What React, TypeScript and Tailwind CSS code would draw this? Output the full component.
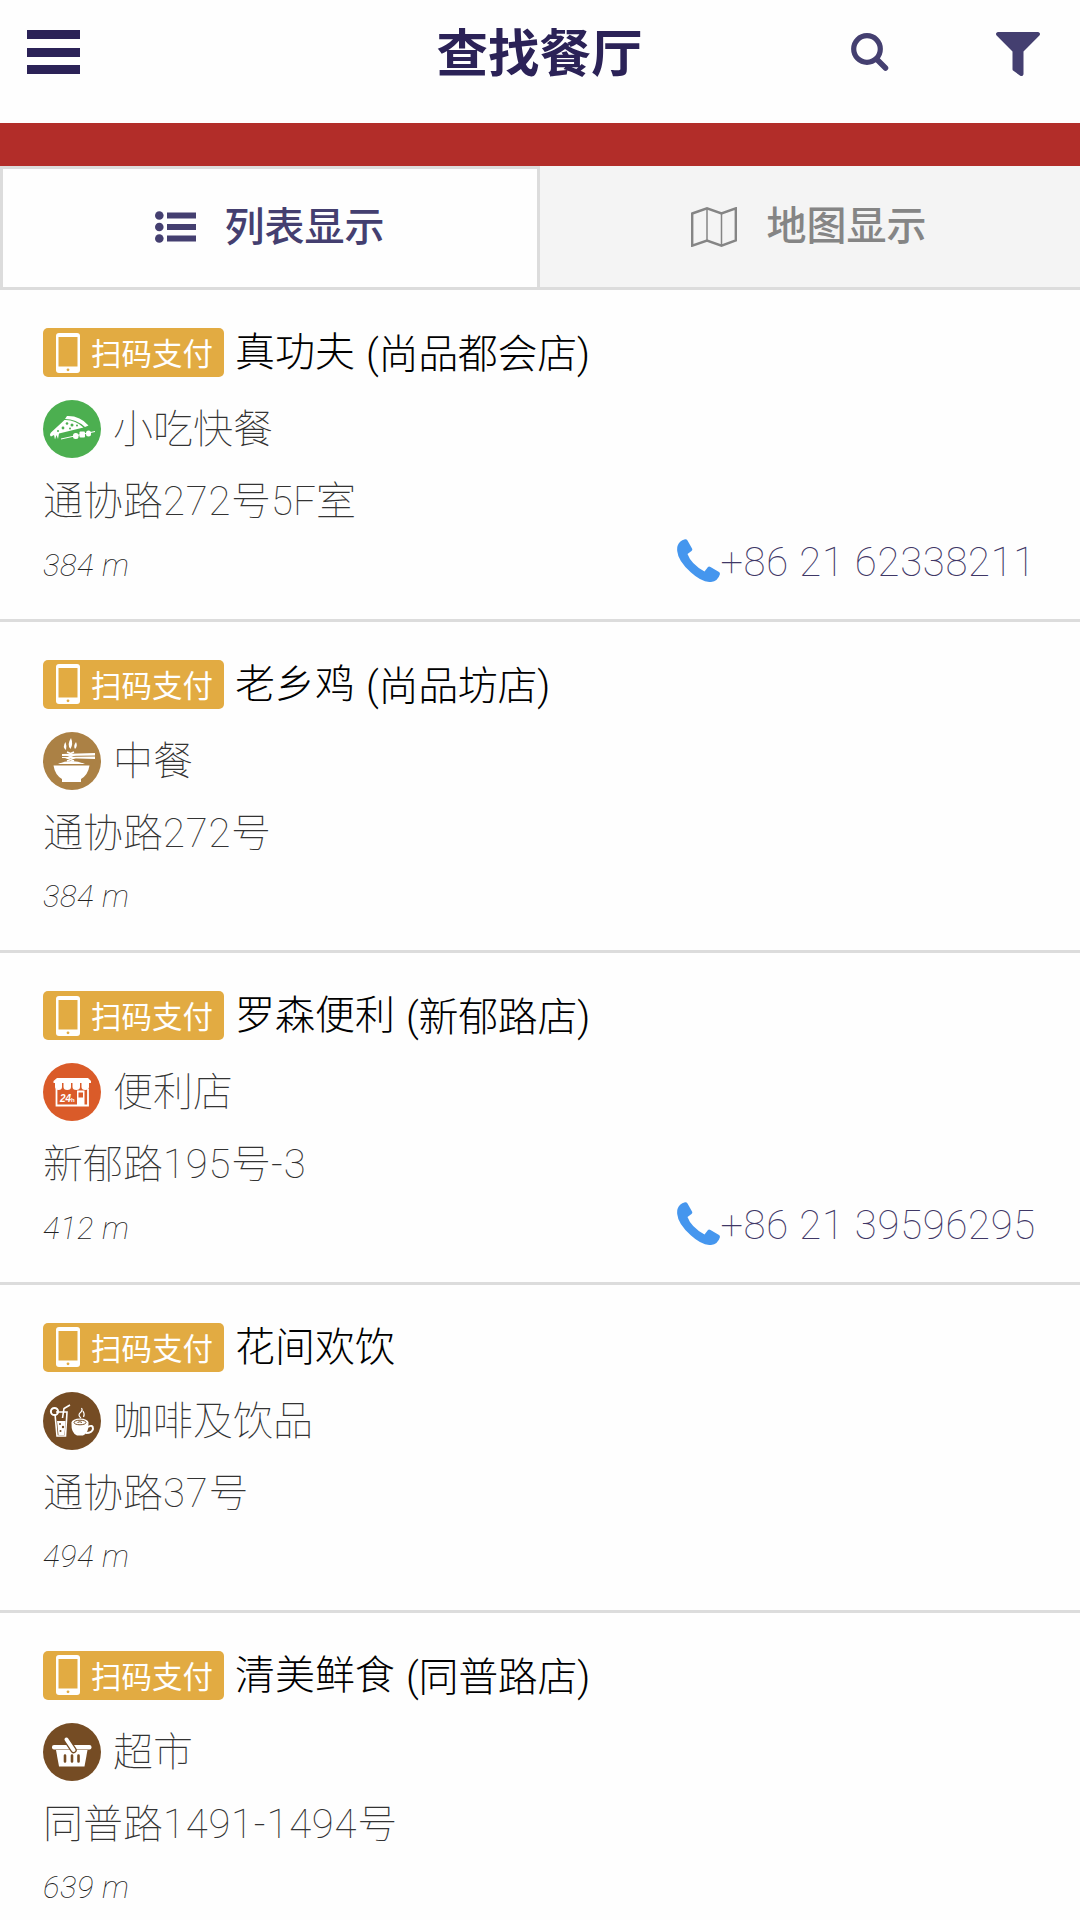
import { FaFilter } from "react-icons/fa";

type Place = {
  name: string
  branch?: string
  category: string
  icon: string
  address: string
  distance: string
  phone?: string
}

const places: Place[] = [
  { name: "真功夫", branch: "(尚品都会店)", category: "小吃快餐", icon: "snack", address: "通协路272号5F室", distance: "384 m", phone: "+86 21 62338211" },
  { name: "老乡鸡", branch: "(尚品坊店)", category: "中餐", icon: "chinese", address: "通协路272号", distance: "384 m" },
  { name: "罗森便利", branch: "(新郁路店)", category: "便利店", icon: "store", address: "新郁路195号-3", distance: "412 m", phone: "+86 21 39596295" },
  { name: "花间欢饮", category: "咖啡及饮品", icon: "drinks", address: "通协路37号", distance: "494 m" },
  { name: "清美鲜食", branch: "(同普路店)", category: "超市", icon: "market", address: "同普路1491-1494号", distance: "639 m" },
]

const CategoryIcon = ({ icon }: { icon: string }) => {
  if (icon === "snack") {
    return (
      <svg viewBox="0 0 58 58" className="w-[58px] h-[58px] shrink-0">
        <circle cx="29" cy="29" r="29" fill="#4caf50" />
        <path d="M24 16Q37 15.500 45.500 25.500L42 27Q33 19 22 19Z" fill="#fff" />
        <path d="M21.500 20Q32 19.500 40.500 27.500L16 33.500L15 39L13.500 35L12 39.500L11 35L8 36.500Q6 35 8 32.500Z" fill="#fff" />
        <g fill="#4caf50">
          <circle cx="24" cy="23.500" r="1.300" />
          <circle cx="29" cy="25" r="1.500" />
          <circle cx="20" cy="28" r="1.400" />
          <circle cx="27" cy="28.500" r="1" />
          <circle cx="15" cy="31" r="1" />
          <circle cx="34" cy="25.500" r="1" />
        </g>
        <path d="M18 39L52 31.500" stroke="#fff" strokeWidth="1" />
        <rect x="30" y="33" width="5.500" height="6" rx="2.500" fill="#fff" />
        <rect x="36.500" y="31.500" width="5.500" height="6" rx="1" fill="#fff" />
        <rect x="43" y="30.500" width="5" height="6" rx="2.500" fill="#fff" />
      </svg>
    )
  }
  if (icon === "chinese") {
    return (
      <svg viewBox="0 0 58 58" className="w-[58px] h-[58px] shrink-0">
        <circle cx="29" cy="29" r="29" fill="#ab8145" />
        <path d="M23 18Q19 15 22.500 10Q24 14 23 18ZM27.500 17Q23.500 13 28 6Q30.500 12 27.500 17ZM32 17Q30 14 33 10Q35 14 32 17Z" fill="#fff" />
        <path d="M19 22L52 21V23.500L19 24ZM19 25L52 24.500V27L19 26Z" fill="#fff" />
        <path d="M24 20L31 23L24 26L31 29M31 20L24 23L31 26L24 29" stroke="#fff" strokeWidth="1.500" fill="none" />
        <path d="M15 32Q28 26 42 32Z" fill="#fff" />
        <path d="M10.500 33.500H46.500Q45 43 38 47V50H19V47Q12 43 10.500 33.500Z" fill="#fff" />
      </svg>
    )
  }
  if (icon === "store") {
    return (
      <svg viewBox="0 0 58 58" className="w-[58px] h-[58px] shrink-0">
        <circle cx="29" cy="29" r="29" fill="#da5b29" />
        <path d="M14 15H45L48 18V20H10.500V18Z" fill="#fff" />
        <path d="M12 19.500H19V24A3.500 3 0 0 1 12 24ZM20.500 19.500H28V24A3.700 3 0 0 1 20.500 24ZM29.500 19.500H37V24A3.700 3 0 0 1 29.500 24ZM38.500 19.500H46V24A3.700 3 0 0 1 38.500 24Z" fill="#fff" />
        <path d="M13.500 26V42.500H45V26" stroke="#fff" strokeWidth="1.800" fill="none" />
        <rect x="34" y="27.500" width="7.500" height="15" fill="#fff" />
        <rect x="35.500" y="29.500" width="4.500" height="5" fill="#da5b29" />
        <text x="17" y="38.500" fill="#fff" className="text-[10px] font-bold italic font-['Liberation_Sans']">24</text>
        <text x="28" y="38.500" fill="#fff" className="text-[6px] font-bold font-['Liberation_Sans']">h</text>
      </svg>
    )
  }
  if (icon === "drinks") {
    return (
      <svg viewBox="0 0 58 58" className="w-[58px] h-[58px] shrink-0">
        <circle cx="29" cy="29" r="29" fill="#754c24" />
        <g stroke="#fff" fill="none" strokeWidth="1.600">
          <path d="M12 22L14 44H22.500L24 20H13" />
          <circle cx="11.500" cy="19.500" r="3.600" strokeWidth="2" />
          <path d="M19.500 26L21 16.500L27 13" />
          <path d="M45 35Q50 32 50 37Q49 41 43 41" strokeWidth="2" />
          <path d="M38 26Q34 23 38 20Q40 18 38.500 16M40.500 25Q42 22 40 19" strokeWidth="1.200" />
        </g>
        <path d="M14 29H22.500L21.500 43H15.500Z" fill="#fff" />
        <path d="M28.500 31Q37 37 45.500 31Q46 41 40 43.500H34Q28 41 28.500 31Z" fill="#fff" />
        <ellipse cx="37" cy="30.500" rx="8.500" ry="4" fill="#fff" />
        <ellipse cx="37" cy="30.500" rx="6" ry="2.300" fill="none" stroke="#754c24" />
        <path d="M34.500 30.500Q37 29 39 30.500" stroke="#754c24" fill="none" />
        <g fill="#754c24">
          <circle cx="17" cy="32" r="1" />
          <circle cx="20" cy="35" r="1.200" />
          <circle cx="17.500" cy="39" r="1" />
        </g>
      </svg>
    )
  }
  return (
    <svg viewBox="0 0 58 58" className="w-[58px] h-[58px] shrink-0">
      <circle cx="29" cy="29" r="29" fill="#754c24" />
      <rect x="9" y="22" width="39.500" height="4.500" rx="2" fill="#fff" />
      <path d="M13 27H44.500L41.500 43.500H16Z" fill="#fff" />
      <path d="M23.500 16.500L30.500 27" stroke="#754c24" strokeWidth="6.500" strokeLinecap="round" />
      <path d="M23.500 16.500L30.500 27" stroke="#fff" strokeWidth="4" strokeLinecap="round" />
      <path d="M22 32.500V38.500M29 32.500V38.500M35.500 32.500V38.500" stroke="#754c24" strokeWidth="2.600" strokeLinecap="round" />
    </svg>
  )
}

const PayBadge = () => (
  <div className="w-[181px] h-[49px] shrink-0 rounded-[5px] bg-[#e2ab42] flex items-center pl-[13px]">
    <svg viewBox="0 0 24 40" className="w-6 h-10 shrink-0">
      <rect width="24" height="40" rx="3" fill="#fff" />
      <rect x="2.500" y="4" width="19" height="29.500" fill="#e2ab42" />
      <circle cx="12" cy="36.800" r="1.400" fill="#e2ab42" />
    </svg>
    <span className="ml-[11px] pt-[5px] text-[30.500px] leading-[44px] text-white whitespace-nowrap">扫码支付</span>
  </div>
)

// house numbers are set a little wider than the characters around them
const Address = ({ text }: { text: string }) => (
  <p className="mt-4 text-[40px] leading-[56px] font-thin text-[#333]">
    {text.split(/(\d[\d-]+|-\d)/).map((part, i) => (
      i % 2 ? <span key={i} className="tracking-[0.8px]">{part}</span> : part
    ))}
  </p>
)

const PlaceCard = ({ place }: { place: Place }) => (
  <li className={`${place.branch ? "h-[331.500px]" : "h-[328px]"} shrink-0 border-b-[3px] border-[#dcdcdc] pl-[43px] pr-11 pt-[38px]`}>
    <div className="flex items-start">
      <PayBadge />
      <h2 className="ml-[11px] pt-px h-[49px] text-[40px] leading-[48px] font-light text-black whitespace-pre">
        {place.name}
        {place.branch && <span className="relative top-[2px] ml-[11px] tracking-[-0.3px]">{place.branch}</span>}
      </h2>
    </div>
    <div className={`${place.branch ? "mt-[23px]" : "mt-5"} flex items-center gap-3`}>
      <CategoryIcon icon={place.icon} />
      <span className="pt-0.5 text-[40px] leading-[56px] font-thin text-[#333]">{place.category}</span>
    </div>
    <Address text={place.address} />
    <div className="mt-1 h-16 flex items-center justify-between">
      <span className="text-[31px] font-thin italic tracking-[0.6px] text-[#222]">{place.distance}</span>
      {place.phone && (
        <a className="-mt-1.5 flex items-center text-[40px] font-thin text-[#3f3766]">
          <svg viewBox="0 0 43 43" className="-mt-1.5 w-[43px] h-[43px]" fill="#4596ee">
            <path d="M0.500 7Q2 2 8 0.300Q9.500 0 10.500 1.500L15 9.500Q15.800 11 14.500 12L10.500 15Q14 25 27.500 32.500L31 28Q32 27 33.500 28L42 33Q43.300 34 42.800 35.500Q41 42 34 43Q25 43.500 14 33.500Q1 22 0.200 12Q0 9 0.500 7Z" />
          </svg>
          <span className="tracking-[0.750px]">{place.phone}</span>
        </a>
      )}
    </div>
  </li>
)

const App = () => {
  return (
    <main className="w-[1080px] h-[1920px] overflow-hidden bg-[#fefefe] font-['Roboto','Noto_Sans_CJK_SC',sans-serif] flex flex-col">
      <header className="h-[123px] shrink-0 grid grid-cols-[1fr_auto_1fr] items-start">
        <button className="ml-[27px] mt-[30px] w-[53px] h-11 flex flex-col justify-between">
          <span className="w-full h-[9px] bg-[#2b2257]"></span>
          <span className="w-full h-[9px] bg-[#2b2257]"></span>
          <span className="w-full h-[9px] bg-[#2b2257]"></span>
        </button>
        <h1 className="mt-[25px] -ml-px text-[51.500px] leading-[60px] font-semibold text-[#2b2257]">查找餐厅</h1>
        <div className="flex justify-end pr-10 pt-8">
          <svg viewBox="0 0 38 38" className="mt-px mr-[107px] w-[38px] h-[38px]" fill="none" stroke="#443f70">
            <circle cx="16" cy="16" r="13.300" strokeWidth="5.200" />
            <path d="M25.500 26L34.500 35" strokeWidth="5.500" strokeLinecap="round" />
          </svg>
          <FaFilter className="w-11 h-11 text-[#443f70]" />
        </div>
      </header>
      <div className="h-[43px] shrink-0 bg-[#b22d29]"></div>
      <nav className="h-[124px] shrink-0 flex border-b-[3px] border-[#dcdcdc]">
        <button className="w-[540px] flex items-center justify-center gap-[29px] border-t-[3px] border-x-[3px] border-[#dcdcdc] pb-px pr-px text-[40px] font-medium text-[#443f70]">
          <svg viewBox="0 0 41 32" className="-mt-px w-[41px] h-8" fill="#443f70">
            <circle cx="4.300" cy="4.500" r="4.300" />
            <circle cx="4.300" cy="16" r="4.300" />
            <circle cx="4.300" cy="27.500" r="4.300" />
            <path d="M12 1.500H41V7.500H12ZM12 13H41V19H12ZM12 24.500H41V30.500H12Z" />
          </svg>
          列表显示
        </button>
        <button className="flex-1 flex items-center justify-center gap-[30px] bg-[#f4f4f4] pt-px pr-[3px] text-[40px] font-medium text-[#858585]">
          <svg viewBox="0 0 46 40" className="-mt-px w-[46px] h-10" fill="none" stroke="#858585" strokeWidth="2.400">
            <path d="M1.200 6.500L16 1.300L30.500 6.500L44.800 1.300V33.500L30.500 38.700L16 33.500L1.200 38.700Z" />
            <path d="M16 1V33.500M30.500 6.500V39" strokeWidth="1.500" />
          </svg>
          地图显示
        </button>
      </nav>
      <ul className="flex flex-col">
        {places.map((place) => <PlaceCard key={place.name} place={place} />)}
      </ul>
    </main>
  )
}

export default App
